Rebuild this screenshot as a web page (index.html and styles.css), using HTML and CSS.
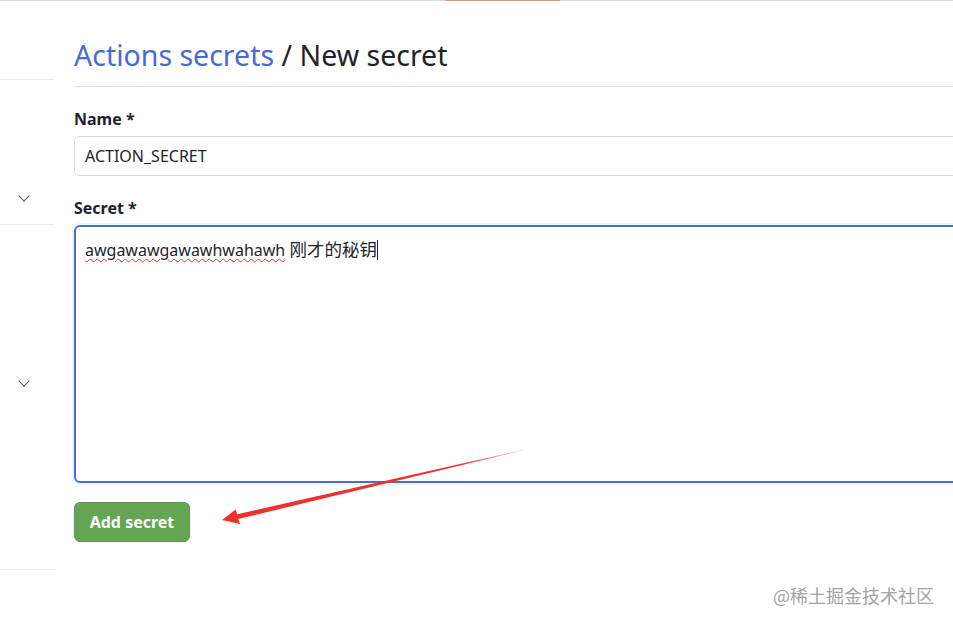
FILE: index.html
```html
<!DOCTYPE html>
<html lang="zh-CN">
<head>
<meta charset="utf-8">
<title>New secret</title>
<link rel="stylesheet" href="styles.css">
</head>
<body>
<div class="topline"><span class="topline-gap"></span><span class="topline-accent"></span></div>
<div class="layout">
  <aside class="sidebar">
    <div class="side-block side-first"></div>
    <div class="side-block side-second"><span class="chev"></span></div>
    <div class="side-block side-third"><span class="chev"></span></div>
  </aside>
  <main class="main">
    <h1 class="title"><a class="title-link" href="#">Actions secrets</a> / New secret</h1>
    <form class="form">
      <label class="label">Name *</label>
      <div class="input">ACTION_SECRET</div>
      <label class="label label-secret">Secret *</label>
      <div class="textarea"><span class="misspelled">awgawawgawawhwahawh</span> <span class="cjk">刚才的秘钥</span><span class="caret"></span></div>
      <button class="btn" type="button">Add secret</button>
    </form>
  </main>
</div>
<svg class="arrow" width="953" height="626" viewBox="0 0 953 626">
  <defs>
    <linearGradient id="fade" x1="222" y1="520" x2="523" y2="450" gradientUnits="userSpaceOnUse">
      <stop offset="0" stop-color="#f0302e"/>
      <stop offset="0.8" stop-color="#f0302e"/>
      <stop offset="1" stop-color="#f0302e" stop-opacity="0.2"/>
    </linearGradient>
  </defs>
  <polygon fill="url(#fade)" points="222,520 235.6,509.4 237.2,514.2 523,449.8 523,450.3 238.3,519.0 240.0,524.0"/>
</svg>
<div class="watermark">@稀土掘金技术社区</div>
</body>
</html>
```
FILE: styles.css
```css
html, body {
  margin: 0;
  padding: 0;
  background: #ffffff;
  overflow: hidden;
  width: 953px;
  height: 626px;
}
body {
  position: relative;
  font-family: "Noto Sans", "Open Sans", "Noto Sans CJK SC", sans-serif;
  color: #1f2328;
}
.topline {
  display: flex;
  height: 1px;
  background: #dcdcdc;
}
.topline-gap {
  width: 445px;
}
.topline-accent {
  width: 115px;
  background: #d4a07c;
}
.layout {
  display: flex;
  gap: 20px;
}
.sidebar {
  width: 54px;
  flex: none;
}
.side-block {
  border-bottom: 1px solid #ebebeb;
  display: flex;
  justify-content: center;
}
.side-first {
  height: 78px;
}
.side-second {
  height: 144px;
  align-items: flex-end;
}
.side-second .chev {
  margin-bottom: 24px;
}
.side-third {
  height: 344px;
  align-items: flex-start;
}
.side-third .chev {
  margin-top: 152px;
}
.chev {
  width: 7px;
  height: 7px;
  border-right: 1.6px solid #555b61;
  border-bottom: 1.6px solid #555b61;
  transform: rotate(45deg);
  margin-left: -6px;
}
.main {
  width: 920px;
  flex: none;
}
.title {
  margin: 0;
  padding-top: 36px;
  padding-bottom: 12px;
  font-size: 28.5px;
  font-weight: 400;
  line-height: 37px;
  border-bottom: 1px solid #dedede;
  color: #1f2328;
  white-space: nowrap;
}
.title-link {
  color: #4a69d2;
  text-decoration: none;
}
.form {
  display: flex;
  flex-direction: column;
  align-items: flex-start;
}
.label {
  font-size: 16px;
  font-weight: 700;
  line-height: 22px;
  margin-top: 21px;
  margin-bottom: 6px;
}
.label-secret {
  margin-top: 21px;
  margin-bottom: 6px;
}
.input {
  box-sizing: border-box;
  width: 100%;
  height: 40px;
  border: 1px solid #d3d7dc;
  border-radius: 6px;
  padding: 0 10px;
  font-size: 16px;
  line-height: 38px;
  color: #1f2328;
}
.textarea {
  box-sizing: border-box;
  width: 100%;
  height: 258px;
  border: 2px solid #4c6dd0;
  border-radius: 6px;
  padding: 11px 9px;
  font-size: 16px;
  line-height: 22px;
  color: #1f2328;
  box-shadow: 0 0 0 2px #eef6fd;
}
.misspelled {
  text-decoration: underline wavy #e33;
  text-decoration-thickness: 1px;
  text-underline-offset: 2px;
}
.cjk {
  font-size: 17.5px;
  font-family: "Noto Sans CJK SC", sans-serif;
}
.caret {
  display: inline-block;
  width: 1px;
  height: 20px;
  background: #1f2328;
  vertical-align: -4px;
}
.btn {
  margin-top: 19px;
  width: 116px;
  height: 40px;
  border: 1px solid #5a9a4b;
  border-radius: 6px;
  background: #63a553;
  color: #ffffff;
  font-family: inherit;
  font-size: 16px;
  font-weight: 700;
  padding: 0;
  cursor: pointer;
}
.arrow {
  position: absolute;
  left: 0;
  top: 0;
  pointer-events: none;
}
.watermark {
  position: absolute;
  left: 773px;
  top: 584px;
  font-size: 18px;
  line-height: 22px;
  color: #a3a3a3;
  font-family: "Noto Sans CJK SC", sans-serif;
  white-space: nowrap;
}
```
